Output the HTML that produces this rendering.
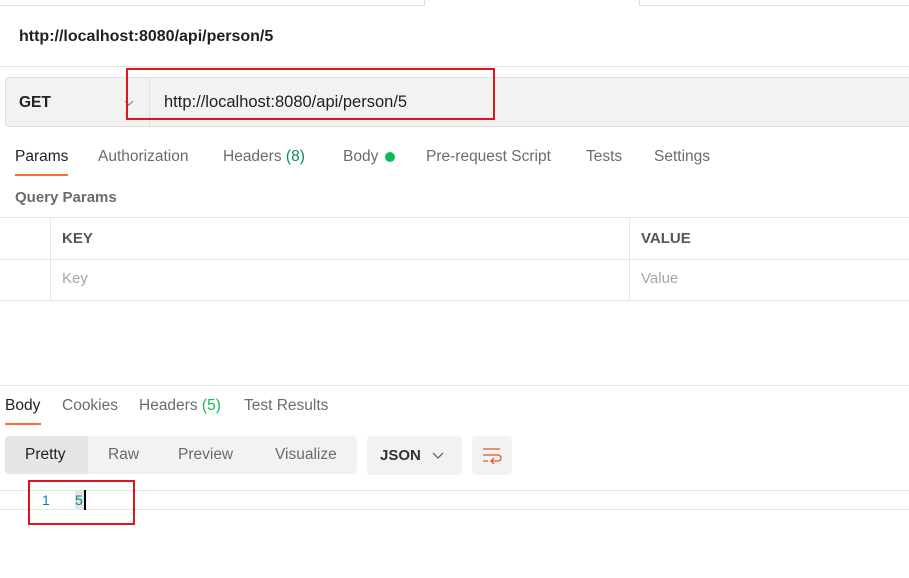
<!DOCTYPE html>
<html><head><style>
body{margin:0;width:909px;height:578px;background:#fff;font-family:"Liberation Sans",sans-serif;position:relative;overflow:hidden;color:#212121}
.a{position:absolute}
.t{font-size:15.5px;color:#6b6b6b}
</style></head><body>
<div class="a" style="left:-1px;top:-1px;width:424px;height:5px;border:1px solid #e0e0e0;background:#fff"></div>
<div class="a" style="left:639px;top:-1px;width:280px;height:5px;border:1px solid #e0e0e0"></div>
<div class="a" style="left:19px;top:28px;font-size:16px;font-weight:bold;color:#212121">http://localhost:8080/api/person/5</div>
<div class="a" style="left:0;top:66px;width:909px;height:1px;background:#e6e6e6"></div>
<div class="a" style="left:5px;top:77px;width:910px;height:48px;background:#f2f2f2;border:1px solid #e0e0e0;border-radius:4px"></div>
<div class="a" style="left:149px;top:78px;width:1px;height:48px;background:#e0e0e0"></div>
<div class="a" style="left:19px;top:94px;font-size:15.5px;font-weight:bold">GET</div>
<svg class="a" style="left:124px;top:100px" width="10" height="7"><path d="M1 1l4 4 4-4" stroke="#888" fill="none" stroke-width="1.2"/></svg>
<div class="a" style="left:164px;top:93px;font-size:16.5px">http://localhost:8080/api/person/5</div>
<div class="a" style="left:126px;top:68px;width:365px;height:48px;border:2px solid #e0141e"></div>
<div class="a t" style="left:15px;top:148px;color:#212121">Params</div>
<div class="a" style="left:15px;top:174px;width:53px;height:2px;background:#ff6c37"></div>
<div class="a t" style="left:98px;top:148px">Authorization</div>
<div class="a t" style="left:223px;top:148px">Headers <span style="color:#0b8a5e">(8)</span></div>
<div class="a t" style="left:343px;top:148px">Body</div>
<div class="a" style="left:385px;top:152px;width:10px;height:10px;border-radius:50%;background:#0cbb52"></div>
<div class="a t" style="left:426px;top:148px">Pre-request Script</div>
<div class="a t" style="left:586px;top:148px">Tests</div>
<div class="a t" style="left:654px;top:148px">Settings</div>
<div class="a" style="left:15px;top:189px;font-size:15px;font-weight:bold;color:#6b6b6b">Query Params</div>
<div class="a" style="left:0;top:217px;width:909px;height:1px;background:#e6e6e6"></div>
<div class="a" style="left:0;top:259px;width:909px;height:1px;background:#e6e6e6"></div>
<div class="a" style="left:0;top:300px;width:909px;height:1px;background:#e6e6e6"></div>
<div class="a" style="left:50px;top:218px;width:1px;height:82px;background:#e6e6e6"></div>
<div class="a" style="left:629px;top:218px;width:1px;height:82px;background:#e6e6e6"></div>
<div class="a" style="left:62px;top:230px;font-size:15px;font-weight:bold;color:#555">KEY</div>
<div class="a" style="left:641px;top:230px;font-size:15px;font-weight:bold;color:#555">VALUE</div>
<div class="a" style="left:62px;top:270px;font-size:15px;color:#a6a6a6">Key</div>
<div class="a" style="left:641px;top:270px;font-size:15px;color:#a6a6a6">Value</div>
<div class="a" style="left:0;top:385px;width:909px;height:1px;background:#e6e6e6"></div>
<div class="a t" style="left:5px;top:397px;color:#212121">Body</div>
<div class="a" style="left:5px;top:423px;width:36px;height:2px;background:#ff6c37"></div>
<div class="a t" style="left:62px;top:397px">Cookies</div>
<div class="a t" style="left:139px;top:397px">Headers <span style="color:#0cbb52">(5)</span></div>
<div class="a t" style="left:244px;top:397px">Test Results</div>
<div class="a" style="left:5px;top:436px;width:352px;height:38px;background:#f2f2f2;border-radius:4px"></div>
<div class="a" style="left:5px;top:436px;width:83px;height:38px;background:#e6e6e6;border-radius:4px 0 0 4px"></div>
<div class="a t" style="left:25px;top:446px;color:#212121">Pretty</div>
<div class="a t" style="left:108px;top:446px">Raw</div>
<div class="a t" style="left:178px;top:446px">Preview</div>
<div class="a t" style="left:275px;top:446px">Visualize</div>
<div class="a" style="left:367px;top:436px;width:95px;height:39px;background:#f2f2f2;border-radius:4px"></div>
<div class="a" style="left:380px;top:447px;font-size:15px;font-weight:bold;color:#333">JSON</div>
<svg class="a" style="left:432px;top:452px" width="12" height="8"><path d="M1 1l5 5 5-5" stroke="#666" fill="none" stroke-width="1.3"/></svg>
<div class="a" style="left:472px;top:436px;width:40px;height:39px;background:#f2f2f2;border-radius:4px"></div>
<svg class="a" style="left:482px;top:446px" width="20" height="20"><path d="M1 3h17M1 9h15a3 3 0 0 1 0 6h-6M1 15h5M12 12l-3 3 3 3" stroke="#e05a2a" fill="none" stroke-width="1.3"/></svg>
<div class="a" style="left:0;top:490px;width:909px;height:1px;background:#e6e6e6"></div>
<div class="a" style="left:0;top:509px;width:909px;height:1px;background:#e6e6e6"></div>
<div class="a" style="left:42px;top:492px;font-size:14px;color:#1a7ab8">1</div>
<div class="a" style="left:75px;top:491px;width:9px;height:18px;background:#dde6f2"></div>
<div class="a" style="left:75px;top:492px;font-size:14px;color:#0b8a5e">5</div>
<div class="a" style="left:84px;top:490px;width:2px;height:20px;background:#000"></div>
<div class="a" style="left:28px;top:480px;width:103px;height:41px;border:2px solid #e0141e"></div>
</body></html>
